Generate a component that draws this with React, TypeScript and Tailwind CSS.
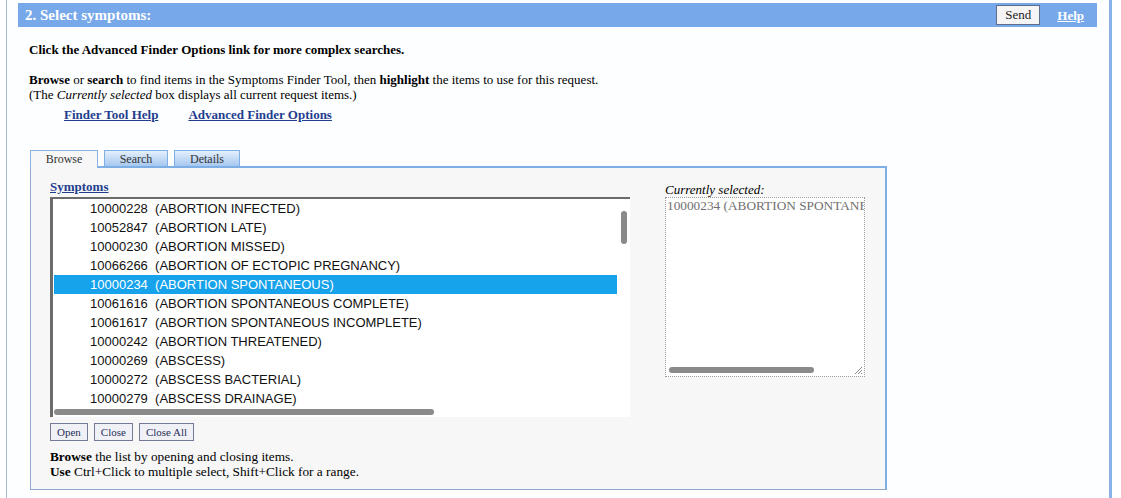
import React from 'react';

type Row = { code: string; name: string; selected?: boolean };

const rows: Row[] = [
  { code: '10000228', name: 'ABORTION INFECTED' },
  { code: '10052847', name: 'ABORTION LATE' },
  { code: '10000230', name: 'ABORTION MISSED' },
  { code: '10066266', name: 'ABORTION OF ECTOPIC PREGNANCY' },
  { code: '10000234', name: 'ABORTION SPONTANEOUS', selected: true },
  { code: '10061616', name: 'ABORTION SPONTANEOUS COMPLETE' },
  { code: '10061617', name: 'ABORTION SPONTANEOUS INCOMPLETE' },
  { code: '10000242', name: 'ABORTION THREATENED' },
  { code: '10000269', name: 'ABSCESS' },
  { code: '10000272', name: 'ABSCESS BACTERIAL' },
  { code: '10000279', name: 'ABSCESS DRAINAGE' },
];

const SmallButton: React.FC<{ label: string }> = ({ label }) => (
  <button className="h-[18px] px-[6px] border border-[#767a99] bg-[#f0f1f6] text-[11px] leading-[16px] text-[#2a2f5c] font-['Liberation_Serif',serif]">
    {label}
  </button>
);

const Tab: React.FC<{ label: string; active?: boolean; width: string }> = ({ label, active, width }) =>
  active ? (
    <div className={`${width} relative z-10 -mb-[2px] h-[18px] border border-b-0 border-[#8db3e2] bg-[#f7f7f7] text-center text-[12px] leading-[16px] text-[#333]`}>
      {label}
    </div>
  ) : (
    <div className={`${width} h-[16px] border border-b-0 border-[#7eaee6] bg-linear-to-b from-[#e4effc] to-[#a6c8f0] text-center text-[12px] leading-[16px] text-[#333]`}>
      {label}
    </div>
  );

export default function App() {
  return (
    <div className="min-h-[498px] bg-white font-['Liberation_Serif',serif] text-[13px] leading-[15px] text-black">
      <div className="ml-[6px] w-[1106px] min-h-[498px] border-l border-l-[#a9bad6] border-r-[3px] border-r-[#88b2e8] bg-[#fdfeff] pt-[3px] pl-[11px]">
        {/* section header */}
        <div className="w-[1079px] h-[24px] bg-[#76a8ea] flex items-center pl-[7px] pr-[13px]">
          <h2 className="text-[15px] font-bold text-white">2. Select symptoms:</h2>
          <button className="ml-auto w-[44px] h-[20px] border border-[#5e6e88] bg-[#f5f5f5] text-[13px] leading-[18px] text-[#222]">
            Send
          </button>
          <a href="#" className="ml-[17px] font-bold text-white underline">
            Help
          </a>
        </div>

        <div className="pl-[11px]">
          <p className="mt-[15px] font-bold">Click the Advanced Finder Options link for more complex searches.</p>
          <p className="mt-[15px]">
            <b>Browse</b> or <b>search</b> to find items in the Symptoms Finder Tool, then <b>highlight</b> the items to use for this request.
            <br />
            (The <i>Currently selected</i> box displays all current request items.)
          </p>
          <div className="mt-[5px] pl-[35px] flex gap-[30px] font-bold text-[#1f3e8e]">
            <a href="#" className="underline">Finder Tool Help</a>
            <a href="#" className="underline">Advanced Finder Options</a>
          </div>

          {/* finder tool */}
          <div className="ml-px mt-[28px] w-[857px]">
            <div className="flex items-end gap-[6px] h-[16px]">
              <Tab label="Browse" active width="w-[68px]" />
              <Tab label="Search" width="w-[64px]" />
              <Tab label="Details" width="w-[66px]" />
            </div>
            <div className="h-[324px] border-t-2 border-r-2 border-t-[#7eaee6] border-r-[#7eaee6] border-l border-b border-l-[#8fa8cc] border-b-[#8fa8cc] bg-[#f7f7f7] pl-[19px] pt-[11px] flex">
              <div className="w-[580px]">
                <a href="#" className="font-bold underline text-[#1f3e8e]">Symptoms</a>
                <div className="relative mt-[3px] h-[220px] border-t-2 border-l-[3px] border-[#6b6b6b] bg-white pl-px overflow-hidden font-['Liberation_Sans',Arial,sans-serif]">
                  {rows.map((r) => (
                    <div
                      key={r.code}
                      className={`w-[563px] h-[19px] leading-[19px] pl-[36px] whitespace-pre text-[13px] ${r.selected ? 'bg-[#17a2ec] text-white' : 'text-[#111]'}`}
                    >
                      {`${r.code}  (${r.name})`}
                    </div>
                  ))}
                  {/* overlay scrollbars */}
                  <div className="absolute left-[568px] top-[12px] w-[6px] h-[33px] rounded-full bg-[#8a8a8a]" />
                  <div className="absolute left-[1px] top-[210px] w-[380px] h-[6px] rounded-full bg-[#8a8a8a]" />
                </div>
                <div className="mt-[6px] flex gap-[6px]">
                  <SmallButton label="Open" />
                  <SmallButton label="Close" />
                  <SmallButton label="Close All" />
                </div>
                <p className="mt-[8px] text-[13.3px]">
                  <b>Browse</b> the list by opening and closing items.
                  <br />
                  <b>Use</b> Ctrl+Click to multiple select, Shift+Click for a range.
                </p>
              </div>

              <div className="ml-[35px] mt-[3px]">
                <div className="italic">Currently selected:</div>
                <div className="relative w-[200px] h-[180px] border border-dotted border-[#9a9a9a] bg-white pl-px overflow-hidden">
                  <div className="whitespace-nowrap text-[13.3px] text-[#707070]">10000234 (ABORTION SPONTANEOUS)</div>
                  <div className="absolute left-[3px] top-[169px] w-[145px] h-[6px] rounded-full bg-[#8a8a8a]" />
                  <svg className="absolute right-[1px] bottom-[1px]" width="10" height="10" viewBox="0 0 10 10">
                    <path d="M9 2 L2 9 M9 5 L5 9 M9 8 L8 9" stroke="#8a8a8a" strokeWidth="1" />
                  </svg>
                </div>
              </div>
            </div>
          </div>
        </div>
      </div>
    </div>
  );
}
